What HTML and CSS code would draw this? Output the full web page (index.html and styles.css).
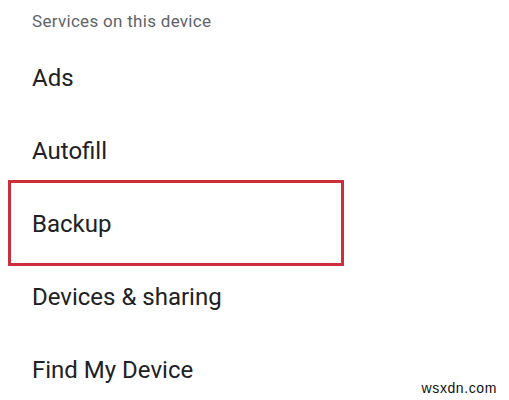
FILE: index.html
```html
<!DOCTYPE html>
<html lang="en">
<head>
  <meta charset="UTF-8">
  <title>Services on this device</title>
  <meta name="viewport" content="width=device-width, initial-scale=1.0" />
  <link rel="stylesheet" href="styles.css">
</head>
<body>
  <div class="screen">
    <h2 class="section-title">Services on this device</h2>
    <ul class="list">
      <li class="item">Ads</li>
      <li class="item">Autofill</li>
      <li class="item highlight">Backup</li>
      <li class="item">Devices &amp; sharing</li>
      <li class="item">Find My Device</li>
    </ul>
    <span class="watermark">wsxdn.com</span>
  </div>
</body>
</html>
```

FILE: styles.css
```css
body {
  margin: 0;
  padding: 0;
  background: #ffffff;
  font-family: 'Roboto', 'Liberation Sans', sans-serif;
  color: #202124;
}

.screen {
  position: relative;
  width: 509px;
  height: 400px;
  overflow: hidden;
}

.section-title {
  margin: 0;
  padding: 11px 0 10px 32px;
  font-size: 17px;
  line-height: 20px;
  font-weight: 400;
  color: #5f6368;
  letter-spacing: 0.3px;
}

.list {
  list-style: none;
  margin: 0;
  padding: 0;
}

.item {
  display: flex;
  align-items: center;
  height: 73px;
  padding-left: 32px;
  font-size: 24px;
  line-height: 24px;
}

.highlight {
  position: relative;
}

.highlight::after {
  content: "";
  position: absolute;
  left: 8px;
  top: -7px;
  width: 336px;
  height: 86px;
  box-sizing: border-box;
  border: 3px solid #cc2f3b;
}

.watermark {
  position: absolute;
  right: 12px;
  bottom: 4px;
  font-family: 'Liberation Sans', Arial, sans-serif;
  font-size: 14px;
  letter-spacing: 0.6px;
  color: #111;
}
```
